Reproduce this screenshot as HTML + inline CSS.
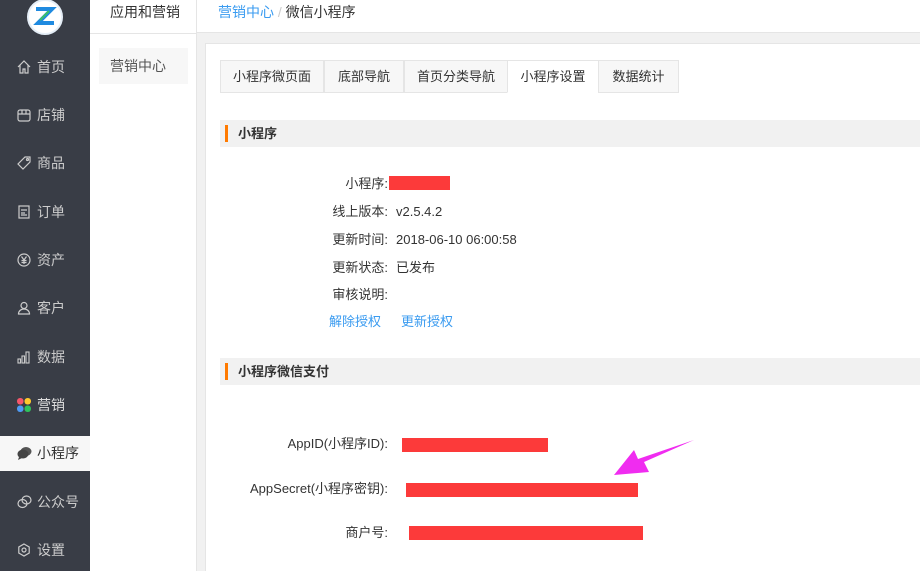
<!DOCTYPE html>
<html style="overflow:hidden"><head><meta charset="utf-8"><style>
*{margin:0;padding:0;box-sizing:border-box}
html,body{width:920px;height:571px;overflow:hidden}
body{font-family:"Liberation Sans","Noto Sans CJK SC",sans-serif;font-size:13px;line-height:18px;color:#333;background:#fff;position:relative}
.a{position:absolute}
.side{left:0;top:0;width:90px;height:571px;background:#393d46}
.nav{position:absolute;left:0;width:90px;height:35px;line-height:35px;color:#ccc;font-size:14px;padding-left:37px}
.nav svg{position:absolute;left:17px;top:10px}
.nav.on{background:#f7f7f7;color:#333}
.tab{position:absolute;top:60px;height:33px;line-height:32px;text-align:center;background:#f7f7f7;border:1px solid #e5e5e5;color:#333}
.sec{position:absolute;left:220px;width:700px;height:27px;background:#f1f1f1;font-weight:bold;line-height:27px;padding-left:18px}
.sec:before{content:"";position:absolute;left:5px;top:5px;width:3px;height:17px;background:#ff7a00}
.lab{position:absolute;text-align:right;width:160px}
.red{position:absolute;background:#fc3a3a}
</style></head><body>
<div class="a side"></div>
<div class="a" style="left:27px;top:-1px;width:36px;height:36px;border-radius:50%;background:#fff;border:2px solid #e5eef7;overflow:hidden">
<svg width="32" height="32" viewBox="0 0 32 32"><path d="M7 8h16l-14 14h16" stroke="#1f8ae0" stroke-width="4" fill="none"/><path d="M11 19l9-9" stroke="#3bbf6a" stroke-width="2"/></svg></div>
<div class="nav" style="top:50px"><svg width="14" height="14" viewBox="0 0 14 14" fill="none" stroke="#ccc" stroke-width="1.2"><path d="M1 7L7 1l6 6M3 5v8h3V9h2v4h3V5"/></svg>首页</div>
<div class="nav" style="top:98px"><svg width="14" height="14" viewBox="0 0 14 14" fill="none" stroke="#ccc" stroke-width="1.2"><rect x="1" y="2" width="12" height="11" rx="2"/><path d="M1 6h12M5 2v4M9 2v4"/></svg>店铺</div>
<div class="nav" style="top:146px"><svg width="14" height="14" viewBox="0 0 14 14" fill="none" stroke="#ccc" stroke-width="1.2"><path d="M8 1h5v5L6 13 1 8z"/><circle cx="10.5" cy="3.5" r="1"/></svg>商品</div>
<div class="nav" style="top:195px"><svg width="14" height="14" viewBox="0 0 14 14" fill="none" stroke="#ccc" stroke-width="1.2"><rect x="2" y="1" width="10" height="12"/><path d="M4 5h6M4 8h4M4 10h6"/></svg>订单</div>
<div class="nav" style="top:243px"><svg width="14" height="14" viewBox="0 0 14 14" fill="none" stroke="#ccc" stroke-width="1.2"><circle cx="7" cy="7" r="6"/><path d="M4.5 3.5L7 7l2.5-3.5M7 7v4M4.5 7.5h5M4.5 9.5h5"/></svg>资产</div>
<div class="nav" style="top:291px"><svg width="14" height="14" viewBox="0 0 14 14" fill="none" stroke="#ccc" stroke-width="1.2"><circle cx="7" cy="4.5" r="3"/><path d="M1.5 13c0-3 2.5-5 5.5-5s5.5 2 5.5 5z"/></svg>客户</div>
<div class="nav" style="top:340px"><svg width="14" height="14" viewBox="0 0 14 14" fill="none" stroke="#ccc" stroke-width="1.1"><rect x="1" y="9" width="2.5" height="4"/><rect x="5" y="6" width="2.5" height="7"/><rect x="9" y="2" width="3" height="11"/></svg>数据</div>
<div class="nav" style="top:388px"><svg width="14" height="14" viewBox="0 0 14 14"><rect x="0" y="0" width="6.5" height="6.5" rx="3" fill="#f5566a"/><rect x="7.5" y="0" width="6.5" height="6.5" rx="3" fill="#ffc82c"/><rect x="0" y="7.5" width="6.5" height="6.5" rx="3" fill="#4e9bf5"/><rect x="7.5" y="7.5" width="6.5" height="6.5" rx="3" fill="#2fc25b"/></svg><span style="color:#ddd">营销</span></div>
<div class="nav on" style="top:436px"><svg width="15" height="14" viewBox="0 0 15 14"><ellipse cx="9" cy="5.5" rx="5.5" ry="4.5" fill="#555"/><ellipse cx="6" cy="8" rx="5.5" ry="4.5" fill="#444"/><path d="M2 11l-1 3 4-2z" fill="#444"/></svg>小程序</div>
<div class="nav" style="top:485px"><svg width="15" height="14" viewBox="0 0 15 14" fill="none" stroke="#ccc" stroke-width="1.2"><ellipse cx="9.5" cy="5" rx="4.5" ry="4"/><ellipse cx="5.5" cy="8.5" rx="4.5" ry="4"/></svg>公众号</div>
<div class="nav" style="top:533px"><svg width="14" height="14" viewBox="0 0 14 14" fill="none" stroke="#ccc" stroke-width="1.2"><path d="M7 1l5.2 3v6L7 13 1.8 10V4z"/><circle cx="7" cy="7" r="2"/></svg>设置</div>

<div class="a" style="left:90px;top:0;width:107px;height:571px;border-right:1px solid #e5e5e5"></div>
<div class="a" style="left:90px;top:33px;width:107px;height:1px;background:#e5e5e5"></div>
<div class="a" style="left:110px;top:3px;font-size:14px;color:#333">应用和营销</div>
<div class="a" style="left:99px;top:48px;width:89px;height:36px;background:#f7f7f7;line-height:36px;padding-left:11px;color:#555;font-size:14px">营销中心</div>

<div class="a" style="left:197px;top:0;width:723px;height:571px;background:#f1f1f1"></div>
<div class="a" style="left:197px;top:0;width:723px;height:33px;background:#fff;border-bottom:1px solid #e5e5e5"></div>
<div class="a" style="left:218px;top:3px;font-size:14px"><span style="color:#3a9bf0">营销中心</span> <span style="color:#ccc">/</span> 微信小程序</div>
<div class="a" style="left:205px;top:43px;width:715px;height:528px;background:#fff;border-left:1px solid #e5e5e5;border-top:1px solid #e5e5e5"></div>

<div class="tab" style="left:220px;width:104px">小程序微页面</div>
<div class="tab" style="left:324px;width:80px">底部导航</div>
<div class="tab" style="left:404px;width:104px">首页分类导航</div>
<div class="tab" style="left:507px;width:92px;background:#fff;border-bottom-color:#fff">小程序设置</div>
<div class="tab" style="left:598px;width:81px">数据统计</div>

<div class="sec" style="top:120px">小程序</div>
<div class="lab" style="left:228px;top:175px">小程序:</div><div class="red" style="left:389px;top:176px;width:61px;height:14px"></div>
<div class="lab" style="left:228px;top:203px">线上版本:</div><div class="a" style="left:396px;top:203px">v2.5.4.2</div>
<div class="lab" style="left:228px;top:231px">更新时间:</div><div class="a" style="left:396px;top:231px">2018-06-10 06:00:58</div>
<div class="lab" style="left:228px;top:259px">更新状态:</div><div class="a" style="left:396px;top:259px">已发布</div>
<div class="lab" style="left:228px;top:286px">审核说明:</div>
<div class="a" style="left:329px;top:313px;color:#3a9bf0">解除授权</div>
<div class="a" style="left:401px;top:313px;color:#3a9bf0">更新授权</div>

<div class="sec" style="top:358px">小程序微信支付</div>
<div class="lab" style="left:226px;top:435px;width:162px">AppID(小程序ID):</div><div class="red" style="left:402px;top:438px;width:146px;height:14px"></div>
<div class="lab" style="left:226px;top:480px;width:162px">AppSecret(小程序密钥):</div><div class="red" style="left:406px;top:483px;width:232px;height:14px"></div>
<div class="lab" style="left:226px;top:524px;width:162px">商户号:</div><div class="red" style="left:409px;top:526px;width:234px;height:14px"></div>
<svg class="a" style="left:610px;top:436px" width="90" height="44" viewBox="0 0 90 44"><path d="M84 4L34 26l5 10L4 39l20-25 4 9z" fill="#f02cf0"/></svg>
</body></html>
